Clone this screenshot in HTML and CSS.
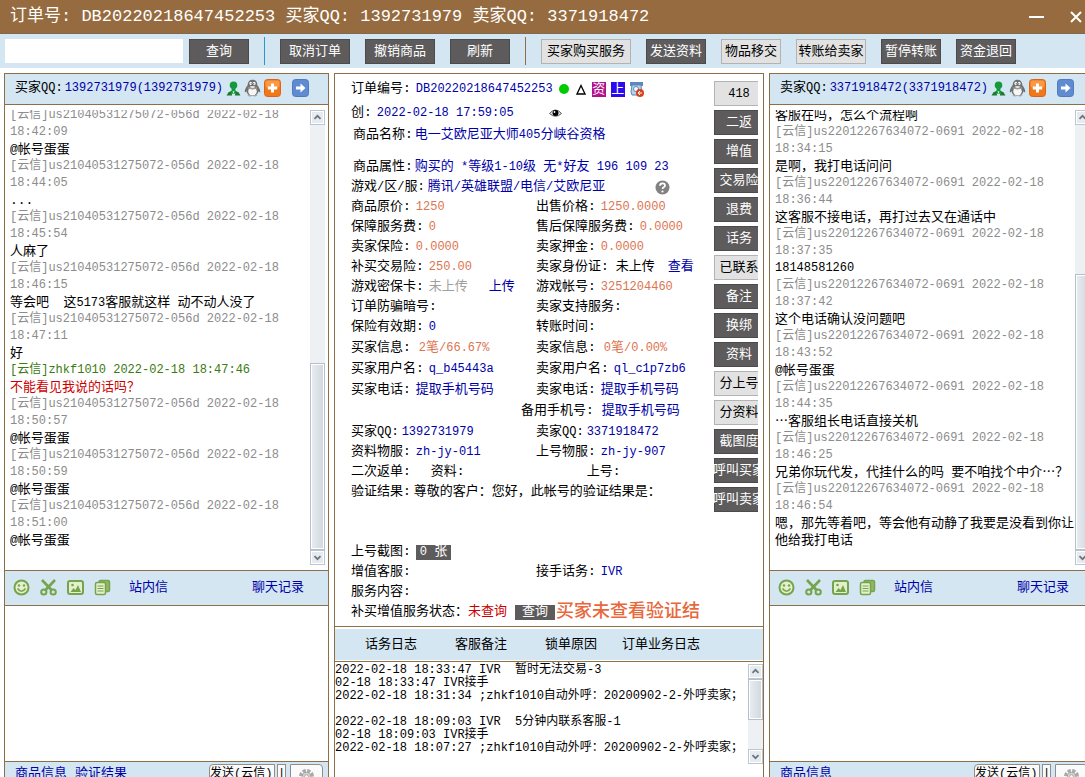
FILE: index.html
```html
<!DOCTYPE html>
<html lang="zh-CN">
<head>
<meta charset="utf-8">
<title>订单号: DB20220218647452253</title>
<link rel="stylesheet" href="styles.css">
</head>
<body>
<svg class="sprite" aria-hidden="true">
  <symbol id="person" viewBox="0 0 16 16"><circle cx="8" cy="4.6" r="4" fill="#129a3c"/><path d="M6 7h4v3l3 2v1l-5 .5L3 13v-1l3-2z" fill="#129a3c"/><path d="M.6 15.4l2-3.4 3 0 1 3.4zM15.4 15.4l-2-3.4-3 0-1 3.4z" fill="#1d7a2a"/><path d="M7 11l1 2.500 1-2.500z" fill="#e8f5ee"/></symbol>
  <symbol id="penguin" viewBox="0 0 16 17"><path d="M3.4 6C3.4 2.400 5.200.6 8 .6s4.600 1.800 4.600 5.400c1.600 2 2.700 4 2.700 6 0 .8-1 .6-1.800-.4-.2 3-2.500 4.400-5.500 4.400s-5.300-1.400-5.500-4.400c-.8 1-1.800 1.200-1.800.4 0-2 1.100-4 2.700-6z" fill="#707070"/><ellipse cx="8" cy="11.500" rx="4" ry="4" fill="#f6f6f6"/><ellipse cx="6.400" cy="4.200" rx="1.300" ry="1.700" fill="#fff"/><ellipse cx="9.600" cy="4.200" rx="1.300" ry="1.700" fill="#fff"/><circle cx="6.800" cy="4.500" r=".6" fill="#222"/><circle cx="9.200" cy="4.500" r=".6" fill="#222"/><path d="M5 6.600h6l-3 1.600z" fill="#ddd"/><path d="M3.500 8.200q4.500 2 9 0" stroke="#999" stroke-width="1.200" fill="none"/><path d="M3 15.600q2.500-1.200 4.600.4-2 1-4.600-.4zM13 15.600q-2.500-1.200-4.600.4 2 1 4.600-.4z" fill="#a5a5a5"/></symbol>
  <symbol id="plus" viewBox="0 0 17 18"><rect x=".5" y=".5" width="16" height="17" rx="3" fill="#f07818" stroke="#d8641a"/><rect x="1.500" y="1.500" width="14" height="7" rx="2" fill="#fa9846"/><path d="M7 4.500h3v3h3.200v3H10v3H7v-3H3.800v-3H7z" fill="#fff"/></symbol>
  <symbol id="arrow" viewBox="0 0 17 18"><rect x=".5" y=".5" width="16" height="17" rx="3" fill="#5f8bd0" stroke="#4f7abf"/><path d="M4 7.500h4.500V4.500L13.500 9l-5 4.500v-3H4z" fill="#fff"/></symbol>
  <symbol id="smile" viewBox="0 0 17 17"><circle cx="8.500" cy="8.500" r="7" fill="#e4f0cd" stroke="#76a44c" stroke-width="2"/><circle cx="6" cy="6.500" r="1.200" fill="#76a44c"/><circle cx="11" cy="6.500" r="1.200" fill="#76a44c"/><path d="M4.500 9.500q4 5.500 8 0" stroke="#76a44c" stroke-width="1.600" fill="none"/></symbol>
  <symbol id="scissors" viewBox="0 0 17 17"><g fill="none" stroke="#76a44c"><path d="M2 1l9.500 10M15 1L5.500 11" stroke-width="2.600"/><circle cx="3.800" cy="13" r="2.600" stroke-width="2"/><circle cx="13.200" cy="13" r="2.600" stroke-width="2"/></g></symbol>
  <symbol id="image" viewBox="0 0 17 17"><rect x="1" y="2" width="15" height="13" rx="2" fill="#e4f0cd" stroke="#76a44c" stroke-width="2"/><path d="M3.500 13l3-4 2 2 2.500-5 3 7z" fill="#76a44c"/><circle cx="5.500" cy="6" r="1.300" fill="#76a44c"/></symbol>
  <symbol id="copy" viewBox="0 0 17 17"><rect x="5" y="1.500" width="10.500" height="11" rx="1.500" fill="#8fb766" stroke="#76a44c" stroke-width="1.500"/><rect x="1.500" y="3.500" width="10" height="12" rx="1.500" fill="#e4f0cd" stroke="#76a44c" stroke-width="1.500"/><path d="M3.500 7h6M3.500 9.500h6M3.500 12h6" stroke="#76a44c" stroke-width="1.200"/></symbol>
  <symbol id="gear" viewBox="0 0 17 17"><circle cx="8.500" cy="8.500" r="5.500" fill="none" stroke="#a9a9a9" stroke-width="4" stroke-dasharray="3 1.320"/><circle cx="8.500" cy="8.500" r="4.200" fill="#d4d4d4" stroke="#a5a5a5"/><circle cx="8.500" cy="8.500" r="1.800" fill="#fff" stroke="#a5a5a5"/></symbol>
  <symbol id="up" viewBox="0 0 15 15"><path d="M4 9l3.500-3.500L11 9" fill="none" stroke="#6c7482" stroke-width="2"/></symbol>
  <symbol id="down" viewBox="0 0 15 15"><path d="M4 6l3.500 3.500L11 6" fill="none" stroke="#6c7482" stroke-width="2"/></symbol>
</svg>

<header class="titlebar">
  <h1>订单号: DB20220218647452253 买家QQ: 1392731979 卖家QQ: 3371918472</h1>
  <div class="window-controls">
    <button aria-label="最小化"><svg width="17" height="14" viewBox="0 0 17 14"><path d="M1 7h15" stroke="#fff" stroke-width="2"/></svg></button>
    <button aria-label="关闭"><svg width="14" height="14" viewBox="0 0 14 14"><path d="M2 2l10 10M12 2L2 12" stroke="#fff" stroke-width="2"/></svg></button>
  </div>
</header>

<nav class="toolbar">
  <div class="search"><input type="text" aria-label="订单查询"></div>
  <button class="btn w60">查询</button>
  <span class="divider blue"></span>
  <button class="btn w70">取消订单</button>
  <button class="btn w70">撤销商品</button>
  <button class="btn w60">刷新</button>
  <span class="divider"></span>
  <button class="btn light w90">买家购买服务</button>
  <button class="btn w60">发送资料</button>
  <button class="btn light w60">物品移交</button>
  <button class="btn light w70">转账给卖家</button>
  <button class="btn w60">暂停转账</button>
  <button class="btn w60">资金退回</button>
</nav>

<main class="workspace">
  <section class="panel">
    <div class="chat-head">
      <span>买家<span class="n">QQ:</span></span><a href="#" class="n">1392731979(1392731979)</a>
      <div class="contact-icons"><svg class="i15"><use href="#person"/></svg><svg class="i17"><use href="#penguin"/></svg><svg class="i17"><use href="#plus"/></svg><svg class="i17 apart"><use href="#arrow"/></svg></div>
    </div>
    <div class="chat-log">
      <div class="messages">
        <p class="meta">[云信]us21040531275072-056d 2022-02-18 18:42:09</p><p>@帐号蛋蛋</p>
        <p class="meta">[云信]us21040531275072-056d 2022-02-18 18:44:05</p><p>...</p>
        <p class="meta">[云信]us21040531275072-056d 2022-02-18 18:45:54</p><p>人麻了</p>
        <p class="meta">[云信]us21040531275072-056d 2022-02-18 18:46:15</p><p class="pre">等会吧<span class="n">  </span>这<span class="n">5173</span>客服就这样<span class="n"> </span>动不动人没了</p>
        <p class="meta">[云信]us21040531275072-056d 2022-02-18 18:47:11</p><p>好</p>
        <p class="meta own">[云信]zhkf1010 2022-02-18 18:47:46</p><p class="own-text">不能看见我说的话吗？</p>
        <p class="meta">[云信]us21040531275072-056d 2022-02-18 18:50:57</p><p>@帐号蛋蛋</p>
        <p class="meta">[云信]us21040531275072-056d 2022-02-18 18:50:59</p><p>@帐号蛋蛋</p>
        <p class="meta">[云信]us21040531275072-056d 2022-02-18 18:51:00</p><p>@帐号蛋蛋</p>
      </div>
      <div class="scrollbar"><button aria-label="向上"><svg><use href="#up"/></svg></button><div class="track"><div class="thumb buyer-thumb"></div></div><button aria-label="向下"><svg><use href="#down"/></svg></button></div>
    </div>
    <div class="chat-tools">
      <button aria-label="表情"><svg><use href="#smile"/></svg></button><button aria-label="截图"><svg><use href="#scissors"/></svg></button><button aria-label="图片"><svg><use href="#image"/></svg></button><button aria-label="复制"><svg><use href="#copy"/></svg></button>
      <a href="#">站内信</a><a href="#" class="history">聊天记录</a>
    </div>
    <textarea class="composer" aria-label="给买家的消息"></textarea>
    <div class="chat-foot">
      <a href="#">商品信息</a><a href="#">验证结果</a>
      <div class="send"><button class="send-main">发送(云信)</button><button class="send-more">|</button><button class="send-set" aria-label="设置"><svg><use href="#gear"/></svg></button></div>
    </div>
  </section>

  <section class="panel">
    <div class="order">
      <div class="details">
        <div class="row"><span>订单编号:</span><a href="#" class="n">DB20220218647452253</a>
          <svg width="12" height="12" viewBox="0 0 12 12"><circle cx="6" cy="6" r="5" fill="#0c0"/></svg>
          <svg class="tri" width="10" height="11" viewBox="0 0 10 11"><path d="M5 1.500L9 10H1z" fill="none" stroke="#000" stroke-width="1.300"/></svg>
          <b class="tag pink">资</b><b class="tag violet">上</b>
          <svg width="15" height="16" viewBox="0 0 15 16"><path d="M1 1h13v4H1z" fill="#5c88bb"/><path d="M3 4h9l1 10H3l-1-3z" fill="#b8d2ea" stroke="#5c88bb"/><circle cx="7" cy="8" r="2.500" fill="#fff" stroke="#5c88bb"/><circle cx="11" cy="12" r="4" fill="#d8431c"/><path d="M9 12h4M9 12l2-2M9 12l2 2" stroke="#fff" fill="none"/></svg>
        </div>
        <div class="row created"><span>创:</span><a href="#" class="n">2022-02-18 17:59:05</a><svg class="eye" width="13" height="10" viewBox="0 0 13 10"><path d="M.5 5.500Q6.500-1.500 12.500 5.500 6.500 11 .5 5.500z" fill="#e8e8e8" stroke="#555"/><circle cx="6.500" cy="5" r="3" fill="#000"/><circle cx="5.500" cy="4" r=".9" fill="#fff"/></svg></div>
        <div class="row inset"><span>商品名称:</span><a href="#">电一艾欧尼亚大师<span class="n">405</span>分峡谷资格</a></div>
        <div class="row inset attrs"><span>商品属性:</span><a href="#">购买的<span class="n"> *</span>等级<span class="n">1-10</span>级<span class="n"> </span>无<span class="n">*</span>好友<span class="n"> 196 109 23</span></a></div>
        <div class="row tight"><span>游戏<span class="n">/</span>区<span class="n">/</span>服<span class="n">:</span></span><a href="#">腾讯<span class="n">/</span>英雄联盟<span class="n">/</span>电信<span class="n">/</span>艾欧尼亚</a><svg class="help" width="15" height="15" viewBox="0 0 15 15"><circle cx="7.500" cy="7.500" r="7" fill="#828282"/><path d="M5 5.800q0-2.500 2.500-2.500t2.500 2.200q0 1.200-1.300 1.800-1.100.5-1.100 1.700" fill="none" stroke="#fff" stroke-width="1.800"/><circle cx="7.500" cy="11.500" r="1.100" fill="#fff"/></svg></div>
        <div class="pair"><div class="row"><span>商品原价:</span><span class="n price">1250</span></div><div class="row"><span>出售价格:</span><span class="n price">1250.0000</span></div></div>
        <div class="pair"><div class="row"><span>保障服务费:</span><span class="n price">0</span></div><div class="row"><span>售后保障服务费:</span><span class="n price">0.0000</span></div></div>
        <div class="pair"><div class="row"><span>卖家保险:</span><span class="n price">0.0000</span></div><div class="row"><span>卖家押金:</span><span class="n price">0.0000</span></div></div>
        <div class="pair"><div class="row"><span>补买交易险:</span><span class="n price">250.00</span></div><div class="row"><span>卖家身份证:</span><span class="state">未上传</span><a href="#">查看</a></div></div>
        <div class="pair"><div class="row"><span>游戏密保卡:</span><span class="muted">未上传</span><a href="#" class="upload">上传</a></div><div class="row"><span>游戏帐号:</span><span class="n price">3251204460</span></div></div>
        <div class="pair"><div class="row"><span>订单防骗暗号:</span></div><div class="row"><span>卖家支持服务:</span></div></div>
        <div class="pair"><div class="row"><span>保险有效期:</span><a href="#" class="n">0</a></div><div class="row"><span>转账时间:</span></div></div>
        <div class="contacts">
          <div class="pair"><div class="row wide"><span>买家信息:</span><span class="price"><span class="n">2</span>笔<span class="n">/66.67%</span></span></div><div class="row wide"><span>卖家信息:</span><span class="price"><span class="n">0</span>笔<span class="n">/0.00%</span></span></div></div>
          <div class="pair"><div class="row"><span>买家用户名:</span><a href="#" class="n">q_b45443a</a></div><div class="row"><span>卖家用户名:</span><a href="#" class="n">ql_c1p7zb6</a></div></div>
          <div class="pair"><div class="row"><span>买家电话:</span><a href="#">提取手机号码</a></div><div class="row"><span>卖家电话:</span><a href="#">提取手机号码</a></div></div>
          <div class="row spare"><span>备用手机号:</span><a href="#">提取手机号码</a></div>
          <div class="pair"><div class="row tight"><span>买家<span class="n">QQ:</span></span><a href="#" class="n">1392731979</a></div><div class="row tight"><span>卖家<span class="n">QQ:</span></span><a href="#" class="n">3371918472</a></div></div>
        </div>
        <div class="pair"><div class="row"><span>资料物服:</span><a href="#" class="n">zh-jy-011</a></div><div class="row"><span>上号物服:</span><a href="#" class="n">zh-jy-907</a></div></div>
        <div class="row returns"><span>二次返单:</span><span>资料:</span><span class="login">上号:</span></div>
        <div class="row result"><span>验证结果:</span><span>尊敬的客户：您好，此帐号的验证结果是：</span></div>
        <div class="row"><span>上号截图:</span><button class="mini"><span class="n">0 </span>张</button></div>
        <div class="pair"><div class="row"><span>增值客服:</span></div><div class="row"><span>接手话务:</span><a href="#" class="n">IVR</a></div></div>
        <div class="row"><span>服务内容:</span></div>
        <div class="row status"><span>补买增值服务状态：<span class="red">未查询</span></span><button class="mini query">查询</button><strong>买家未查看验证结</strong></div>
      </div>
      <div class="side">
        <button class="btn light n">418</button><button class="btn">二返</button><button class="btn">增值</button><button class="btn">交易险</button><button class="btn">退费</button><button class="btn">话务</button><button class="btn light">已联系</button><button class="btn">备注</button><button class="btn">换绑</button><button class="btn">资料</button><button class="btn light">分上号</button><button class="btn light">分资料</button><button class="btn">截图度</button><button class="btn">呼叫买家</button><button class="btn">呼叫卖家</button>
      </div>
    </div>
    <div class="tabs"><button>话务日志</button><button>客服备注</button><button>锁单原因</button><button>订单业务日志</button></div>
    <div class="event-log">
      <pre>2022-02-18 18:33:47 IVR  暂时无法交易-3
02-18 18:33:47 IVR接手
2022-02-18 18:31:34 ;zhkf1010自动外呼：20200902-2-外呼卖家；

2022-02-18 18:09:03 IVR  5分钟内联系客服-1
02-18 18:09:03 IVR接手
2022-02-18 18:07:27 ;zhkf1010自动外呼：20200902-2-外呼卖家；</pre>
      <div class="scrollbar"><button aria-label="向上"><svg><use href="#up"/></svg></button><div class="track"><div class="thumb log-thumb"></div></div><button aria-label="向下"><svg><use href="#down"/></svg></button></div>
    </div>
  </section>

  <section class="panel">
    <div class="chat-head">
      <span>卖家<span class="n">QQ:</span></span><a href="#" class="n">3371918472(3371918472)</a>
      <div class="contact-icons"><svg class="i15"><use href="#person"/></svg><svg class="i17"><use href="#penguin"/></svg><svg class="i17"><use href="#plus"/></svg><svg class="i17 apart"><use href="#arrow"/></svg></div>
    </div>
    <div class="chat-log">
      <div class="messages">
        <p>客服在吗，怎么个流程啊</p>
        <p class="meta">[云信]us22012267634072-0691 2022-02-18 18:34:15</p><p>是啊，我打电话问问</p>
        <p class="meta">[云信]us22012267634072-0691 2022-02-18 18:36:44</p><p>这客服不接电话，再打过去又在通话中</p>
        <p class="meta">[云信]us22012267634072-0691 2022-02-18 18:37:35</p><p class="n">18148581260</p>
        <p class="meta">[云信]us22012267634072-0691 2022-02-18 18:37:42</p><p>这个电话确认没问题吧</p>
        <p class="meta">[云信]us22012267634072-0691 2022-02-18 18:43:52</p><p>@帐号蛋蛋</p>
        <p class="meta">[云信]us22012267634072-0691 2022-02-18 18:44:35</p><p><span class="cjk">…</span>客服组长电话直接关机</p>
        <p class="meta">[云信]us22012267634072-0691 2022-02-18 18:46:25</p><p>兄弟你玩代发，代挂什么的吗<span class="n"> </span>要不咱找个中介<span class="cjk">…</span>？</p>
        <p class="meta">[云信]us22012267634072-0691 2022-02-18 18:46:54</p><p>嗯，那先等着吧，等会他有动静了我要是没看到你让他给我打电话</p>
      </div>
      <div class="scrollbar"><button aria-label="向上"><svg><use href="#up"/></svg></button><div class="track"><div class="thumb seller-thumb"></div></div><button aria-label="向下"><svg><use href="#down"/></svg></button></div>
    </div>
    <div class="chat-tools">
      <button aria-label="表情"><svg><use href="#smile"/></svg></button><button aria-label="截图"><svg><use href="#scissors"/></svg></button><button aria-label="图片"><svg><use href="#image"/></svg></button><button aria-label="复制"><svg><use href="#copy"/></svg></button>
      <a href="#">站内信</a><a href="#" class="history">聊天记录</a>
    </div>
    <textarea class="composer" aria-label="给卖家的消息"></textarea>
    <div class="chat-foot">
      <a href="#">商品信息</a>
      <div class="send"><button class="send-main">发送(云信)</button><button class="send-more">|</button><button class="send-set" aria-label="设置"><svg><use href="#gear"/></svg></button></div>
    </div>
  </section>
</main>
</body>
</html>
```
FILE: styles.css
```css
* { box-sizing: border-box; }
body {
  margin: 0;
  height: 100vh;
  display: flex;
  flex-direction: column;
  overflow: hidden;
  background: #fff;
  color: #000;
  font: 13px/20px "Liberation Mono", "Noto Sans CJK SC", monospace;
}
button, input, textarea { font: inherit; color: inherit; }
button { padding: 0; border: 0; background: none; }
svg { display: block; flex: none; }
a { color: #0000a8; text-decoration: none; }
p, pre, h1 { margin: 0; }
.sprite { position: absolute; width: 0; height: 0; }
.n { font-size: 12px; white-space: pre; }
.cjk { font-family: "Noto Sans CJK SC", sans-serif; }

.titlebar {
  flex: none;
  height: 34px;
  padding: 0 1px 0 10px;
  display: flex;
  justify-content: space-between;
  align-items: center;
  background: #966b3f;
  border-bottom: 1px solid #7f6a50;
  color: #fff;
}
h1 { font-size: 17px; font-weight: 400; white-space: nowrap; }
.window-controls { display: flex; gap: 24px; margin-right: 1px; }

.toolbar {
  flex: none;
  height: 34px;
  padding: 0 5px;
  display: flex;
  align-items: center;
  gap: 15px;
  background: #d3e6f1;
}
.search { width: 178px; margin-right: -9px; flex: none; }
.search input { display: block; width: 100%; height: 24px; border: 0; padding: 0 4px; background: #fff; }
.btn {
  flex: none;
  height: 25px;
  padding-top: 1px;
  border: 1px solid #4c4b4b;
  background: #5d5b5c;
  color: #fff;
  line-height: 20px;
  white-space: nowrap;
  display: flex;
  align-items: center;
  justify-content: center;
}
.btn.light { background: #e2e2e2; border-color: #b3b3b3; color: #000; }
.w60 { width: 60px; }
.w70 { width: 70px; }
.w90 { width: 90px; }
.divider { flex: none; width: 1px; height: 28px; background: #8b6f47; }
.divider.blue { background: #2a98c4; }

.workspace {
  flex: 1;
  min-height: 0;
  margin: 5px -9px 0 4px;
  display: grid;
  grid-template-columns: 325fr 430fr 325fr;
  gap: 5px;
}
.panel {
  min-width: 0;
  min-height: 0;
  display: flex;
  flex-direction: column;
  border: 1px solid #8b6f47;
  border-bottom: 0;
}

.chat-head {
  flex: none;
  height: 31px;
  padding: 0 0 2px 10px;
  display: flex;
  align-items: center;
  gap: 2px;
  background: #d3e6f1;
  border-bottom: 1px solid #8b6f47;
}
.contact-icons { display: flex; align-items: center; gap: 3px; margin-left: 1px; }
.i15 { width: 15px; height: 15px; }
.i17 { width: 17px; height: 18px; }
.apart { margin-left: 8px; }
.chat-log { flex: 1; min-height: 0; display: flex; padding: 5px 3px 5px 5px; }
.messages { flex: 1; min-width: 0; overflow: hidden; line-height: 17px; }
.messages p { line-height: 17px; overflow-wrap: anywhere; }
.messages span { line-height: 1px; }
.messages p:first-child { margin-top: -3px; }
.messages .meta { font-size: 12px; color: #8c8c8c; }
.messages .own { color: #3b7a10; }
.own-text { color: #c00; }
.pre { white-space: pre; }

.scrollbar { flex: none; width: 15px; display: flex; flex-direction: column; background: #eef1f4; }
.scrollbar button { height: 15px; border: 1px solid #bcc5d0; background: #e6ebf0; box-shadow: inset 0 0 0 1px #fff; }
.scrollbar svg { width: 13px; height: 13px; }
.track { flex: 1; position: relative; }
.thumb {
  position: absolute;
  left: 0;
  right: 0;
  border: 1px solid #b4bfcb;
  box-shadow: inset 0 0 0 1px #fff;
  background: linear-gradient(90deg, #e8edf1, #cfd8df);
}
.buyer-thumb { top: 56%; bottom: 0; }
.seller-thumb { top: 35%; bottom: 0; }
.log-thumb { top: 0; bottom: 42%; }

.chat-tools {
  flex: none;
  height: 36px;
  padding: 0 24px 1px 8px;
  display: flex;
  align-items: center;
  gap: 10px;
  background: #d3e6f1;
  border: solid #8b6f47;
  border-width: 1px 0;
}
.chat-tools svg { width: 17px; height: 17px; }
.chat-tools a { margin-left: 8px; }
.chat-tools .history { margin-left: auto; }
.composer { flex: none; display: block; width: 100%; height: 155px; border: 0; resize: none; background: #fff; }
.chat-foot {
  flex: none;
  height: 16px;
  padding: 2px 5px 0 10px;
  display: flex;
  gap: 8px;
  overflow: hidden;
  background: #d3e6f1;
  border-top: 1px solid #8b6f47;
}
.send { margin-left: auto; display: flex; gap: 2px; height: 28px; }
.send button { background: #fafafa; border: 1px solid #8e8e8e; overflow: hidden; white-space: nowrap; font-size: 12px; line-height: 18px; display: flex; }
.send-main { width: 66px; border-radius: 4px 0 0 0; }
.send-more { width: 9px; }
.send .send-set { width: 33px; margin-left: 2px; border-radius: 0 4px 0 0; padding: 3px 7px; }
.send-set svg { width: 17px; height: 17px; }

.order { flex: none; display: flex; justify-content: space-between; height: 553px; border-bottom: 1px solid #8b6f47; padding: 5px 5px 0 16px; }
.details { flex: 1; min-width: 0; }
.row { display: flex; align-items: center; gap: 5px; height: 20px; white-space: nowrap; }
.pair { display: grid; grid-template-columns: 185px 1fr; }
.created { margin-top: 4px; }
.eye { margin-left: 30px; }
.tri { margin: 0 1px; }
.inset { padding-left: 2px; margin-top: 2px; gap: 2px; }
.attrs { margin-top: 12px; }
.help { margin-left: auto; margin-right: 44px; }
.tag { width: 14px; height: 15px; color: #fff; font-weight: 400; line-height: 15px; text-align: center; }
.pink { background: #b5108c; }
.violet { background: #2a0af0; margin-right: -1px; }
.price { color: #dc7450; }
.muted { color: #a0a0a0; }
.red { color: #c00; }
.state { margin-left: 2px; margin-right: 8px; }
.upload { margin-left: 16px; }
.contacts .row { height: 21px; }
.contacts .wide { gap: 8px; }
.tight { gap: 3px; }
.spare { padding-left: 170px; gap: 8px; }
.returns { gap: 20px; }
.login { margin-left: 102px; }
.result { height: 60px; align-items: flex-start; gap: 3px; }
.mini { height: 15px; padding: 0 4px; background: #5d5b5c; color: #fff; line-height: 14px; }
.query { width: 40px; margin-left: 3px; }
.status strong { margin-left: -4px; color: #e8683c; font-size: 18px; font-weight: 500; }
.side { flex: none; width: 44px; padding-top: 2px; overflow: hidden; display: flex; flex-direction: column; gap: 4px; }
.side .btn { width: 50px; }

.tabs { flex: none; height: 34px; padding: 0 11px; display: flex; align-items: center; border: solid #fff; border-width: 2px 0 1px; background: #d3e6f1; }
.tabs button { width: 90px; }
.event-log { flex: 1; min-height: 0; display: flex; justify-content: space-between; align-items: flex-start; border-top: 1px solid #8b6f47; padding-top: 2px; }
.event-log pre { font: inherit; font-size: 12px; line-height: 13px; }
.event-log .scrollbar { height: 100px; }
```
